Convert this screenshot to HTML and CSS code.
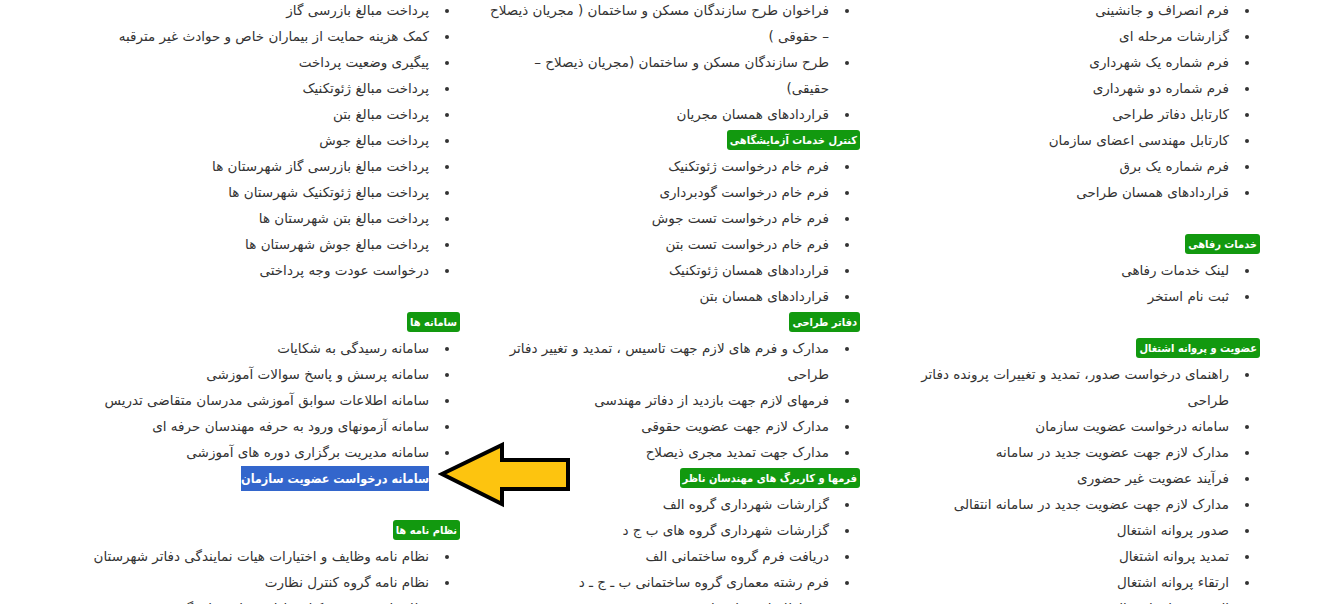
FILE: index.html
```html
<!DOCTYPE html>
<html lang="fa" dir="rtl">
<head>
<meta charset="utf-8">
<title>لینک ها</title>
<link rel="stylesheet" href="styles.css">
</head>
<body>
<div class="page">
  <div class="columns">
    <section class="col">
      <ul class="links">
        <li>فرم انصراف و جانشینی</li>
        <li>گزارشات مرحله ای</li>
        <li>فرم شماره یک شهرداری</li>
        <li>فرم شماره دو شهرداری</li>
        <li>کارتابل دفاتر طراحی</li>
        <li>کارتابل مهندسی اعضای سازمان</li>
        <li>فرم شماره یک برق</li>
        <li>قراردادهای همسان طراحی</li>
      </ul>
      <div class="spacer"></div>
      <h3 class="head"><span class="badge">خدمات رفاهی</span></h3>
      <ul class="links">
        <li>لینک خدمات رفاهی</li>
        <li>ثبت نام استخر</li>
      </ul>
      <div class="spacer"></div>
      <h3 class="head"><span class="badge">عضویت و پروانه اشتغال</span></h3>
      <ul class="links">
        <li>راهنمای درخواست صدور، تمدید و تغییرات پرونده دفاتر طراحی</li>
        <li>سامانه درخواست عضویت سازمان</li>
        <li>مدارک لازم جهت عضویت جدید در سامانه</li>
        <li>فرآیند عضویت غیر حضوری</li>
        <li>مدارک لازم جهت عضویت جدید در سامانه انتقالی</li>
        <li>صدور پروانه اشتغال</li>
        <li>تمدید پروانه اشتغال</li>
        <li>ارتقاء پروانه اشتغال</li>
        <li>المثنی پروانه اشتغال</li>
      </ul>
    </section>

    <section class="col">
      <ul class="links">
        <li>فراخوان طرح سازندگان مسکن و ساختمان ( مجریان ذیصلاح <span class="tail">– حقوقی )</span></li>
        <li>طرح سازندگان مسکن و ساختمان (مجریان ذیصلاح –<br>حقیقی)</li>
        <li>قراردادهای همسان مجریان</li>
      </ul>
      <h3 class="head"><span class="badge">کنترل خدمات آزمایشگاهی</span></h3>
      <ul class="links">
        <li>فرم خام درخواست ژئوتکنیک</li>
        <li>فرم خام درخواست گودبرداری</li>
        <li>فرم خام درخواست تست جوش</li>
        <li>فرم خام درخواست تست بتن</li>
        <li>قراردادهای همسان ژئوتکنیک</li>
        <li>قراردادهای همسان بتن</li>
      </ul>
      <h3 class="head"><span class="badge">دفاتر طراحی</span></h3>
      <ul class="links">
        <li>مدارک و فرم های لازم جهت تاسیس ، تمدید و تغییر دفاتر طراحی</li>
        <li>فرمهای لازم جهت بازدید از دفاتر مهندسی</li>
        <li>مدارک لازم جهت عضویت حقوقی</li>
        <li>مدارک جهت تمدید مجری ذیصلاح</li>
      </ul>
      <h3 class="head"><span class="badge">فرمها و کاربرگ های مهندسان ناظر</span></h3>
      <ul class="links">
        <li>گزارشات شهرداری گروه الف</li>
        <li>گزارشات شهرداری گروه های ب ج د</li>
        <li>دریافت فرم گروه ساختمانی الف</li>
        <li>فرم رشته معماری گروه ساختمانی ب ـ ج ـ د</li>
        <li>فرم اطلاعات ساختمان</li>
      </ul>
    </section>

    <section class="col">
      <ul class="links">
        <li>پرداخت مبالغ بازرسی گاز</li>
        <li>کمک هزینه حمایت از بیماران خاص و حوادث غیر مترقبه</li>
        <li>پیگیری وضعیت پرداخت</li>
        <li>پرداخت مبالغ ژئوتکنیک</li>
        <li>پرداخت مبالغ بتن</li>
        <li>پرداخت مبالغ جوش</li>
        <li>پرداخت مبالغ بازرسی گاز شهرستان ها</li>
        <li>پرداخت مبالغ ژئوتکنیک شهرستان ها</li>
        <li>پرداخت مبالغ بتن شهرستان ها</li>
        <li>پرداخت مبالغ جوش شهرستان ها</li>
        <li>درخواست عودت وجه پرداختی</li>
      </ul>
      <div class="spacer"></div>
      <h3 class="head"><span class="badge">سامانه ها</span></h3>
      <ul class="links">
        <li>سامانه رسیدگی به شکایات</li>
        <li>سامانه پرسش و پاسخ سوالات آموزشی</li>
        <li>سامانه اطلاعات سوابق آموزشی مدرسان متقاضی تدریس</li>
        <li>سامانه آزمونهای ورود به حرفه مهندسان حرفه ای</li>
        <li>سامانه مدیریت برگزاری دوره های آموزشی</li>
        <li class="plain"><span class="selected">سامانه درخواست عضویت سازمان</span></li>
      </ul>
      <div class="spacer"></div>
      <h3 class="head"><span class="badge">نظام نامه ها</span></h3>
      <ul class="links">
        <li>نظام نامه وظایف و اختیارات هیات نمایندگی دفاتر شهرستان</li>
        <li>نظام نامه گروه کنترل نظارت</li>
        <li>نظام نامه نحوه تشکیل و اداره دفاتر نمایندگی</li>
      </ul>
    </section>
  </div>

  <svg class="pointer" width="140" height="72" viewBox="0 0 140 72" aria-hidden="true">
    <polygon points="4,35 64,6 64,21 130,21 130,50 64,50 64,65" fill="#fdc40f" stroke="#000" stroke-width="4" stroke-linejoin="miter"/>
  </svg>
</div>
</body>
</html>
```

FILE: styles.css
```css
html, body {
  margin: 0;
  padding: 0;
  background: #ffffff;
}

body {
  font-family: "DejaVu Sans", "Noto Sans", sans-serif;
  font-size: 13.5px;
  line-height: 26px;
  color: #333333;
  direction: rtl;
}

.page {
  position: relative;
  width: 1338px;
  height: 604px;
  overflow: hidden;
}

.columns {
  width: 1200px;
  margin: -3px auto 0;
  display: grid;
  grid-template-columns: repeat(3, 400px);
}

.col {
  padding: 0 9px;
}

.links {
  margin: 0;
  padding: 0 26px 0 0;
  list-style: disc;
}

.links li {
  margin: 0;
  padding-right: 5px;
}

.links li.plain {
  list-style: none;
}

.tail {
  display: inline-block;
}

.spacer {
  height: 26px;
}

.head {
  margin: 0;
  height: 26px;
  display: flex;
  align-items: center;
  font-size: inherit;
}

.badge {
  display: inline-block;
  background: #12990f;
  color: #ffffff;
  font-family: "DejaVu Sans Condensed", "DejaVu Sans", sans-serif;
  font-stretch: condensed;
  font-weight: bold;
  font-size: 11px;
  line-height: 15px;
  padding: 3px 3px 2px;
  border-radius: 3px;
}

.selected {
  background: #3366cc;
  color: #ffffff;
  font-family: "DejaVu Sans Condensed", "DejaVu Sans", sans-serif;
  font-stretch: condensed;
  font-weight: bold;
  font-size: 12.5px;
  display: inline-block;
  line-height: 25px;
}

.pointer {
  position: absolute;
  left: 438px;
  top: 439px;
}
```
